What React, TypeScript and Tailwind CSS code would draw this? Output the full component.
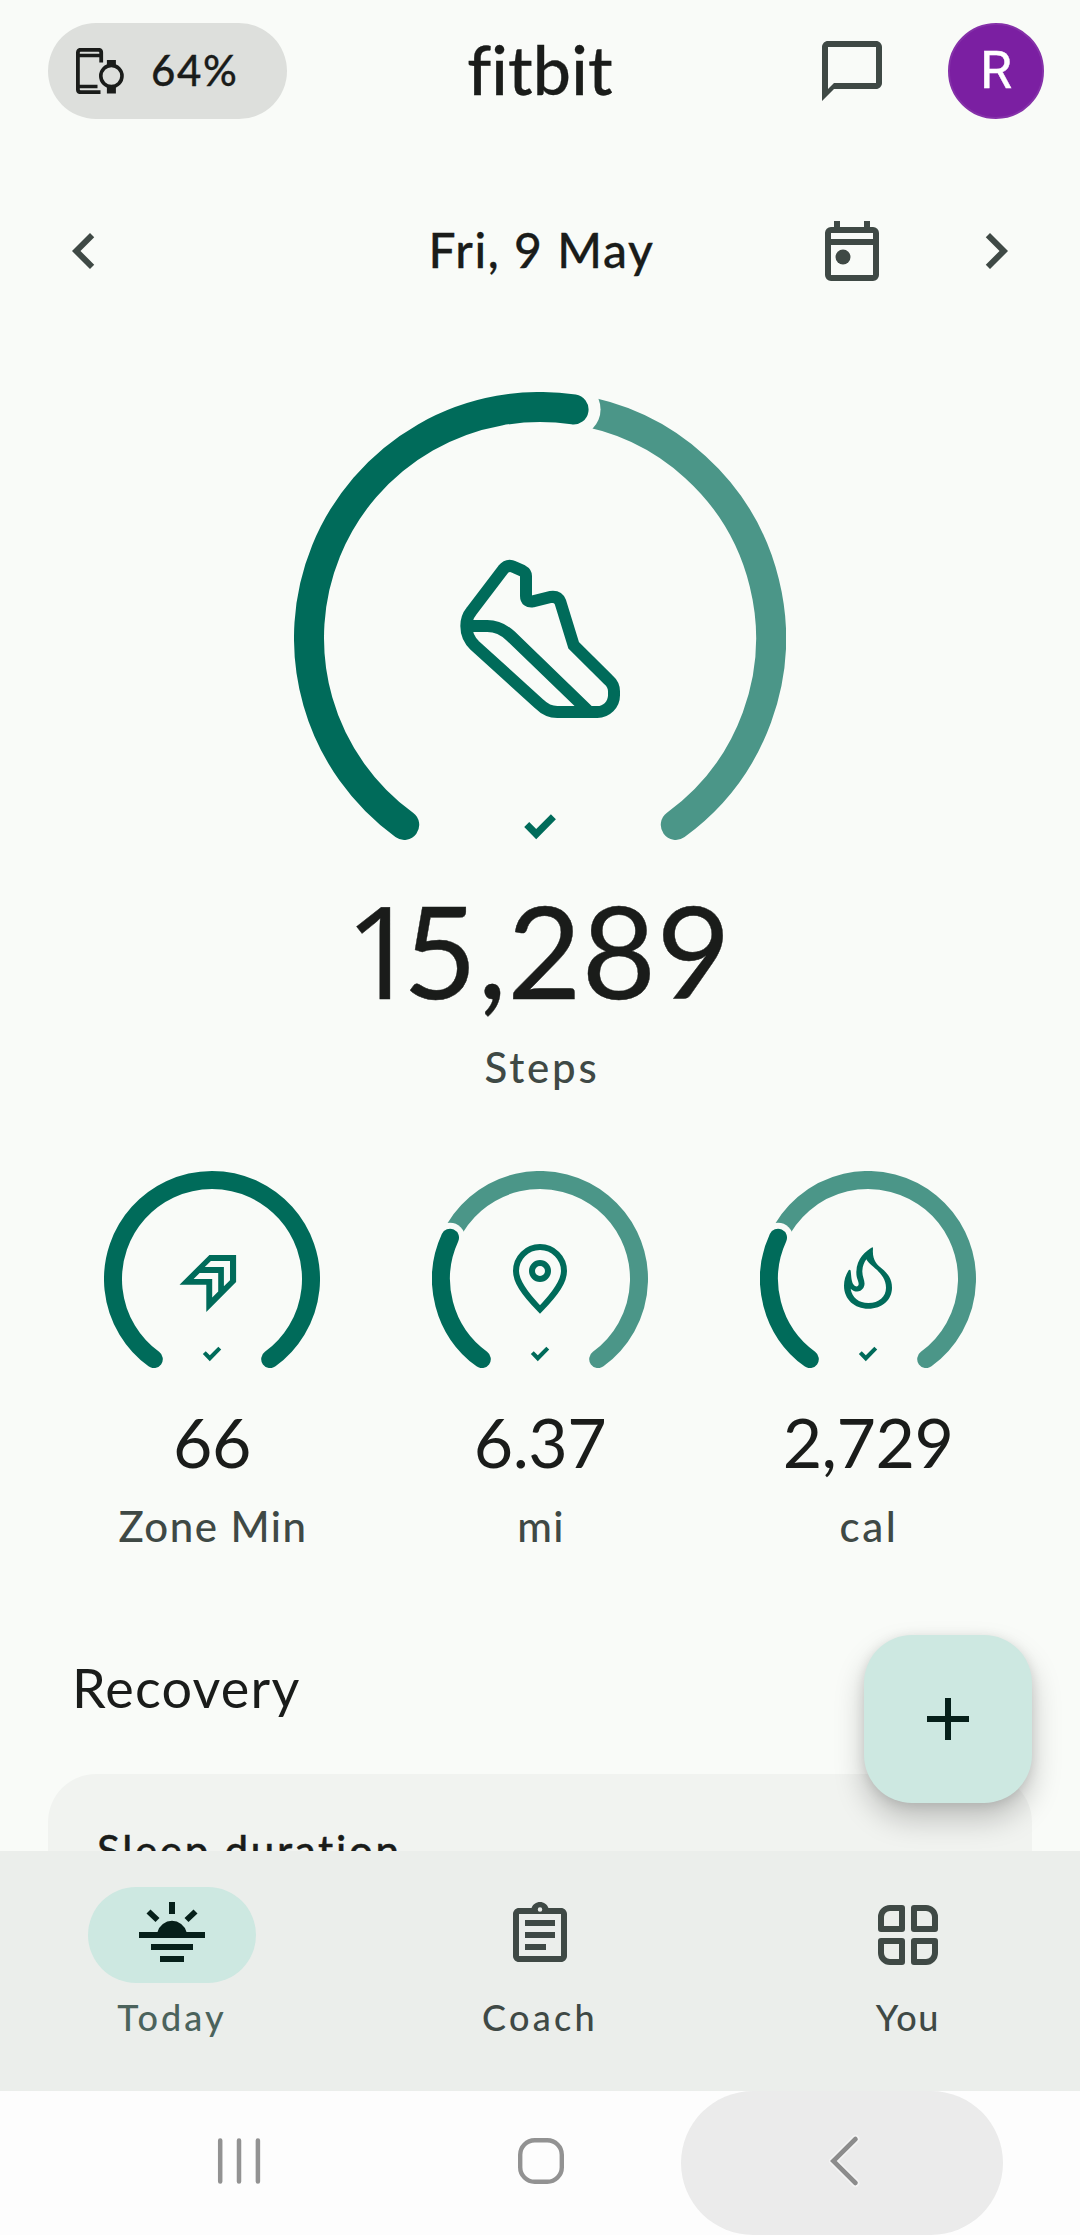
import React from 'react';

interface GaugeProps {
  size: number;
  thickness: number;
  // share of the 288 degree sweep, 0 to 1
  progress: number;
  gap: number;
  checkScale: number;
  checkY: number;
  children: React.ReactNode;
}

interface Metric {
  value: string;
  label: string;
  labelClass: string;
  progress: number;
  icon: React.ReactNode;
}

const SWEEP = 288;
const START = -144;

const pointAt = (center: number, radius: number, degrees: number) => {
  const a = (degrees * Math.PI) / 180;
  return { x: center + radius * Math.sin(a), y: center - radius * Math.cos(a) };
};

const arc = (center: number, radius: number, from: number, to: number) => {
  const p = pointAt(center, radius, from);
  const q = pointAt(center, radius, to);
  return `M${p.x} ${p.y}A${radius} ${radius} 0 ${to - from > 180 ? 1 : 0} 1 ${q.x} ${q.y}`;
};

const Gauge: React.FC<GaugeProps> = ({ size, thickness, progress, gap, checkScale, checkY, children }) => {
  const c = size / 2;
  const r = c - thickness / 2;
  const stop = START + SWEEP * progress;
  const end = pointAt(c, r, stop);
  const height = Math.round(c + r * Math.cos((36 * Math.PI) / 180) + thickness / 2);

  return (
    <svg width={size} height={height} viewBox={`0 0 ${size} ${height}`} fill="none">
      {progress < 1 && (
        <>
          <path d={arc(c, r, stop, -START)} stroke="#4b9688" strokeWidth={thickness} strokeLinecap="round" />
          <circle cx={end.x} cy={end.y} r={thickness / 2 + gap} fill="#f9fbf8" />
        </>
      )}
      <path d={arc(c, r, START, stop)} stroke="#006b5a" strokeWidth={thickness} strokeLinecap="round" />
      {children}
      <path
        transform={`translate(${c - 15.8 * checkScale} ${checkY}) scale(${checkScale})`}
        d="M0 12.7 5 7.7 12 14.7 26.7 0 31.7 5 12 25Z"
        fill="#006b5a"
      />
    </svg>
  );
};

const ShoeIcon = () => (
  <svg x="166" y="166" width="160" height="160" viewBox="540 564 480 480" fill="none" stroke="#006b5a" strokeWidth="36">
    <path d="M702 591Q683 582 669 599L574 724Q559 742 559 768 559 802 584 826L778 1002Q802 1026 832 1026H952A50 50 0 0 0 1002 976V964Q1002 944 986 930L881 826 841 696Q834 678 812 681L759 694Q738 697 738 678V618Q738 608 727 602Z" />
    <path d="M562 768H622Q660 768 692 798L928 1026" />
  </svg>
);

const ZoneIcon = () => (
  <svg x="72" y="72" width="72" height="72" viewBox="0 0 72 72" fill="#006b5a" fillRule="evenodd">
    <path d="M3.5 41.7 33.4 12H60.1V39L30.3 69V41.7ZM34.9 18 28.8 24H47.9V43.2L54 37.2V18ZM23.6 30 17.6 36H36.2V54.6L42.2 48.6V30Z" />
  </svg>
);

const PinIcon = () => (
  <svg x="72" y="72" width="72" height="72" viewBox="0 0 72 72" fill="none" stroke="#006b5a" strokeWidth="6">
    <path d="M36 66.5C19 49 12 38 12 28A24 24 0 0 1 60 28C60 38 53 49 36 66.5Z" />
    <circle cx="36" cy="28" r="8" />
  </svg>
);

const FlameIcon = () => (
  <svg x="72" y="72" width="72" height="72" viewBox="396 279 216 216" fill="#006b5a" fillRule="evenodd">
    <path d="M517 292C498 303 469 325 469 368 469 385 476 392 476 402 476 410 467 412 462 405 454 397 454 378 452 362 451 358 447 358 445 362 437 375 432 390 432 407 432 448 464 476 505 476 547 476 576 449 576 413 576 385 562 370 548 358 530 344 516 330 519 296 519 293 518 292 517 292ZM499 328C510 350 558 368 558 413 558 440 537 459 505 459 477 459 456 443 452 416 465 428 480 428 490 414 500 395 486 385 487 362 488 348 492 338 499 328Z" />
  </svg>
);

const DevicesIcon = () => (
  <svg width="48" height="46" viewBox="0 0 48 46" fill="none" stroke="#1a1c1a">
    <path d="M25.2 14.5V4.5Q25.2 1.8 22.5 1.8H4.5Q1.9 1.8 1.9 4.5V41.5Q1.9 44.2 4.5 44.2H24.5" strokeWidth="3.8" />
    <path d="M2 7.5H25M2 38.5H21.5" strokeWidth="3.4" />
    <circle cx="35.4" cy="28" r="10.6" strokeWidth="3.6" />
    <path d="M35.4 12V18M35.4 38.5V45.5" strokeWidth="9" />
  </svg>
);

const ChatIcon = () => (
  <svg width="72" height="72" viewBox="0 0 24 24" fill="#3f4945">
    <path d="M4 2h16c1.1 0 2 .9 2 2v12c0 1.1-.9 2-2 2H6l-4 4V4c0-1.1.9-2 2-2zm0 16 2-2h14V4H4z" />
  </svg>
);

const CalendarIcon = () => (
  <svg width="72" height="72" viewBox="0 0 24 24" fill="none" stroke="#3f4945" strokeWidth="2">
    <path d="M4 6a1 1 0 0 1 1-1h14a1 1 0 0 1 1 1v14a1 1 0 0 1-1 1H5a1 1 0 0 1-1-1zM4 9h16M7 2v3M17 2v3" />
    <circle cx="9" cy="14" r="2.5" fill="#3f4945" stroke="none" />
  </svg>
);

const ChevronIcon = ({ left = false }: { left?: boolean }) => (
  <svg width="72" height="72" viewBox="0 0 24 24" fill="#3f4945">
    <path
      d={
        left
          ? 'M15.41 7.41 14 6l-6 6 6 6 1.41-1.41L10.83 12z'
          : 'M8.59 16.59 13.17 12 8.59 7.41 10 6l6 6-6 6z'
      }
    />
  </svg>
);

const TodayIcon = () => (
  <svg width="72" height="72" viewBox="0 0 72 72" fill="#06201a">
    <path d="M33 3h6v12h-6zM3 33h18.5a15 15 0 0 1 29 0H69v6H3zM15 45h42v6H15zM24 57h24v6H24z" />
    <path d="M10.5 14.5 14.5 10.5 23.5 19 19.5 23ZM61.5 14.5 57.5 10.5 48.5 19 52.5 23Z" />
  </svg>
);

const CoachIcon = () => (
  <svg width="72" height="72" viewBox="0 0 24 24" fill="#3f4945">
    <path d="M7 15h7v2H7zm0-4h10v2H7zm0-4h10v2H7z" />
    <path
      fillRule="evenodd"
      d="M19 3h-4.18C14.4 1.84 13.3 1 12 1s-2.4.84-2.82 2H5c-1.1 0-2 .9-2 2v14c0 1.1.9 2 2 2h14c1.1 0 2-.9 2-2V5c0-1.1-.9-2-2-2zm-7-.25a.75.75 0 1 1 0 1.5.75.75 0 0 1 0-1.5zM19 19H5V5h14z"
    />
  </svg>
);

const YouIcon = () => (
  <svg width="72" height="72" viewBox="0 0 24 24" fill="none" stroke="#3f4945" strokeWidth="2" strokeLinejoin="round">
    <path d="M10 3v7H3V6a3 3 0 0 1 3-3zM14 3v7h7V6a3 3 0 0 0-3-3zM10 21v-7H3v4a3 3 0 0 0 3 3zM14 21v-7h7v4a3 3 0 0 1-3 3z" />
  </svg>
);

const metrics: Metric[] = [
  { value: '66', label: 'Zone Min', labelClass: 'pl-0.5 tracking-[1.5px]', progress: 1, icon: <ZoneIcon /> },
  { value: '6.37', label: 'mi', labelClass: 'pl-0.5 tracking-[1.3px]', progress: 0.273, icon: <PinIcon /> },
  { value: '2,729', label: 'cal', labelClass: 'pl-0.5 tracking-[2.6px]', progress: 0.273, icon: <FlameIcon /> },
];

const App: React.FC = () => {
  return (
    <div className="flex h-[2235px] w-[1080px] flex-col bg-[#f9fbf8] font-['Lato',sans-serif] text-[#1a1c1a] [font-variant-ligatures:none]">
      <main className="relative h-[1851px] overflow-hidden">
        <header className="grid h-[119px] grid-cols-[1fr_auto_1fr] items-center px-12 pt-[23px]">
          <div className="flex h-24 w-[239px] items-center gap-[27px] rounded-full bg-[#dddfdc] pl-7">
            <DevicesIcon />
            <span className="-mt-0.5 text-[42px] font-medium leading-[48px] tracking-[1.6px] [-webkit-text-stroke:0.3px]">
              64%
            </span>
          </div>
          <h1 className="-mt-1 text-[68px] font-medium leading-[80px] tracking-[0.2px] [-webkit-text-stroke:0.3px]">fitbit</h1>
          <div className="-mr-3 flex items-center justify-end gap-[60px]">
            <ChatIcon />
            <div className="flex size-24 items-center justify-center rounded-full border-2 border-[#8531a9] bg-[#7b1fa2] font-['Roboto',sans-serif] text-[52px] leading-none text-white [-webkit-text-stroke:0.4px]">
              R
            </div>
          </div>
        </header>

        <div className="mt-[84px] grid h-24 grid-cols-[1fr_auto_1fr] items-center px-12">
          <ChevronIcon left />
          <span className="-mt-0.5 pl-[3px] text-[48px] font-medium leading-[56px] tracking-[1.6px] [-webkit-text-stroke:0.3px]">
            Fri, 9 May
          </span>
          <div className="flex items-center justify-end gap-[72px]">
            <CalendarIcon />
            <ChevronIcon />
          </div>
        </div>

        <section className="mt-[93px] flex flex-col items-center">
          <Gauge size={492} thickness={30} progress={0.529} gap={12} checkScale={1} checkY={422.3}>
            <ShoeIcon />
          </Gauge>
          <div className="mt-[46px] pr-1 text-[128px] leading-[128px] tracking-[0.4px] [-webkit-text-stroke:0.4px]">
            {/* footless numeral one */}
            <span className="font-['Open_Sans',sans-serif] leading-none tracking-[-15px]">1</span>5,289
          </div>
          <div className="mt-[29px] pl-1 text-[42px] font-medium leading-[48px] tracking-[2.8px] text-[#3f4945]">Steps</div>
        </section>

        <section className="mx-12 mt-20 grid grid-cols-3">
          {metrics.map((m) => (
            <div key={m.label} className="flex flex-col items-center">
              <Gauge size={216} thickness={18} progress={m.progress} gap={6} checkScale={0.58} checkY={175.7}>
                {m.icon}
              </Gauge>
              <div className="mt-[38px] text-[68px] leading-[72px] tracking-[-0.5px]">{m.value}</div>
              <div className={`mt-6 text-[42px] font-medium leading-[48px] text-[#3f4945] ${m.labelClass}`}>
                {m.label}
              </div>
            </div>
          ))}
        </section>

        <section className="mt-[106px] px-12">
          <h2 className="pl-6 text-[54px] leading-[64px] tracking-[1.2px]">Recovery</h2>
          <div className="mt-[54px] h-60 rounded-[48px] bg-[#f1f3f0] px-[49px] pt-[52px] text-[42px] font-medium leading-[48px] tracking-[2.7px] [-webkit-text-stroke:0.4px]">
            Sleep duration
          </div>
        </section>

        <button
          className="absolute bottom-12 right-12 flex size-[168px] items-center justify-center rounded-[48px] bg-[#cde8e1] shadow-[0_16px_30px_rgba(0,0,0,0.22),0_2px_12px_rgba(0,0,0,0.1)]"
          aria-label="Add"
        >
          <svg width="42" height="42" viewBox="0 0 42 42" stroke="#06201a" strokeWidth="6">
            <path d="M21 0v42M0 21h42" />
          </svg>
        </button>
      </main>

      <nav className="grid h-60 grid-cols-3 gap-6 bg-[#ebeeeb] pt-9 text-[36px] font-medium text-[#3f4945]">
        <div className="flex flex-col items-center">
          <div className="flex h-24 w-[168px] items-center justify-center rounded-full bg-[#cde8e1]">
            <TodayIcon />
          </div>
          <span className="mt-3.5 leading-[40px] tracking-[3.1px] text-[#4b635c]">Today</span>
        </div>
        <div className="flex flex-col items-center">
          <div className="flex h-24 items-center">
            <CoachIcon />
          </div>
          <span className="mt-3.5 leading-[40px] tracking-[3.3px]">Coach</span>
        </div>
        <div className="flex flex-col items-center">
          <div className="flex h-24 items-center">
            <YouIcon />
          </div>
          <span className="mt-3.5 leading-[40px] tracking-[1.7px]">You</span>
        </div>
      </nav>

      {/* system navigation */}
      <div className="flex h-36 items-center bg-[#fdfdfd] pl-[217px]">
        <svg className="-mt-1" width="44" height="46" viewBox="0 0 44 46" stroke="#929292" strokeWidth="4.5" strokeLinecap="round">
          <path d="M3.2 2.5v41M22 2.5v41M40.9 2.5v41" />
        </svg>
        <svg className="-mt-1 ml-[257px]" width="46" height="46" viewBox="0 0 46 46" fill="none" stroke="#929292" strokeWidth="4.4">
          <rect x="2.2" y="2.2" width="41.6" height="41.6" rx="14.5" />
        </svg>
        <div className="ml-[117px] flex h-36 w-[322px] items-center rounded-full bg-[#ebebeb] pl-[148px]">
          <svg className="-mt-1" width="32" height="52" viewBox="0 0 32 52" fill="none" strokeLinecap="round">
            <path d="M26.5 4 4.3 26 26.5 48" stroke="#f4f4f4" strokeWidth="8" />
            <path d="M26.5 4 4.3 26 26.5 48" stroke="#8c8c8c" strokeWidth="4.6" />
          </svg>
        </div>
      </div>
    </div>
  );
};

export default App;
